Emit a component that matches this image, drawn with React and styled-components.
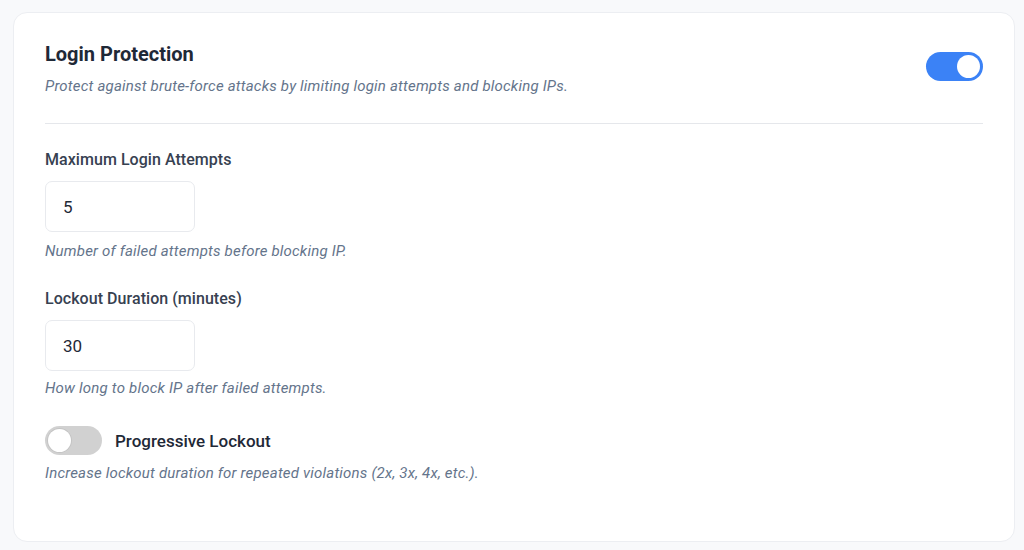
import React, { useState } from "react";
import styled, { createGlobalStyle } from "styled-components";

const Global = createGlobalStyle`
  html, body { margin: 0; padding: 0; background: #f8f9fb; }
  body { font-family: Roboto, "Noto Sans", Arial, sans-serif; }
  * { box-sizing: border-box; }
`;

const Page = styled.div`
  padding: 12px 9px 8px 13px;
`;

const Card = styled.section`
  background: #ffffff;
  border: 1px solid #eceef2;
  border-radius: 14px;
  height: 530px;
  padding: 29px 31px 0 31px;
`;

const Header = styled.div`
  display: flex;
  justify-content: space-between;
  align-items: flex-start;
  padding-bottom: 27px;
  border-bottom: 1px solid #e5e7eb;
`;

const Title = styled.h2`
  margin: 0;
  font-size: 20px;
  line-height: 24px;
  font-weight: 700;
  color: #1f2937;
`;

const Desc = styled.p`
  margin: ${(p) => p.$mt || 10}px 0 0 0;
  font-size: 15px;
  letter-spacing: 0.2px;
  line-height: ${(p) => (p.$small ? 18 : 20)}px;
  font-style: italic;
  color: #64748b;
`;

const Body = styled.div`
  padding-top: 25px;
`;

const Group = styled.div`
  margin-bottom: ${(p) => p.$mb || 28}px;
`;

const Label = styled.label`
  display: block;
  font-size: 16px;
  letter-spacing: 0.05px;
  line-height: 22px;
  font-weight: 500;
  color: #374151;
  margin-bottom: 10px;
`;

const Input = styled.input`
  display: block;
  width: 150px;
  height: 51px;
  border: 1px solid #e8eaee;
  border-radius: 7px;
  padding: 0 16px 0 17px;
  font-family: Roboto, Arial, sans-serif;
  font-size: 17px;
  color: #1f2937;
  background: #fff;
  outline: none;
`;

const SwitchTrack = styled.button`
  position: relative;
  flex: none;
  width: 57px;
  height: 29px;
  border: none;
  border-radius: 15px;
  padding: 0;
  cursor: pointer;
  margin-top: ${(p) => p.$mt || 0}px;
  background: ${(p) => (p.$on ? "#3b82f6" : "#d1d1d1")};
`;

const Knob = styled.span`
  position: absolute;
  top: 3px;
  left: ${(p) => (p.$on ? "31px" : "3px")};
  width: 23px;
  height: 23px;
  border-radius: 50%;
  background: #ffffff;
  box-shadow: 0 0 0 1px ${(p) => (p.$on ? "transparent" : "#c4c4c4")};
`;

const SwitchRow = styled.div`
  display: flex;
  align-items: center;
  gap: 13px;
`;

const SwitchLabel = styled.span`
  font-size: 17px;
  font-weight: 500;
  color: #1f2937;
`;

function Switch({ on, onToggle, mt }) {
  return (
    <SwitchTrack $on={on} $mt={mt} onClick={onToggle} aria-pressed={on}>
      <Knob $on={on} />
    </SwitchTrack>
  );
}

export default function App() {
  const [enabled, setEnabled] = useState(true);
  const [progressive, setProgressive] = useState(false);
  const [attempts, setAttempts] = useState("5");
  const [duration, setDuration] = useState("30");

  return (
    <>
      <Global />
      <Page>
        <Card>
          <Header>
            <div>
              <Title>Login Protection</Title>
              <Desc>
                Protect against brute-force attacks by limiting login attempts and blocking IPs.
              </Desc>
            </div>
            <Switch on={enabled} onToggle={() => setEnabled(!enabled)} mt={10} />
          </Header>
          <Body>
            <Group>
              <Label>Maximum Login Attempts</Label>
              <Input value={attempts} onChange={(e) => setAttempts(e.target.value)} />
              <Desc $small $mt={10}>Number of failed attempts before blocking IP.</Desc>
            </Group>
            <Group $mb={29}>
              <Label>Lockout Duration (minutes)</Label>
              <Input value={duration} onChange={(e) => setDuration(e.target.value)} />
              <Desc $small $mt={8}>How long to block IP after failed attempts.</Desc>
            </Group>
            <div>
              <SwitchRow>
                <Switch on={progressive} onToggle={() => setProgressive(!progressive)} />
                <SwitchLabel>Progressive Lockout</SwitchLabel>
              </SwitchRow>
              <Desc $small $mt={9}>
                Increase lockout duration for repeated violations (2x, 3x, 4x, etc.).
              </Desc>
            </div>
          </Body>
        </Card>
      </Page>
    </>
  );
}
